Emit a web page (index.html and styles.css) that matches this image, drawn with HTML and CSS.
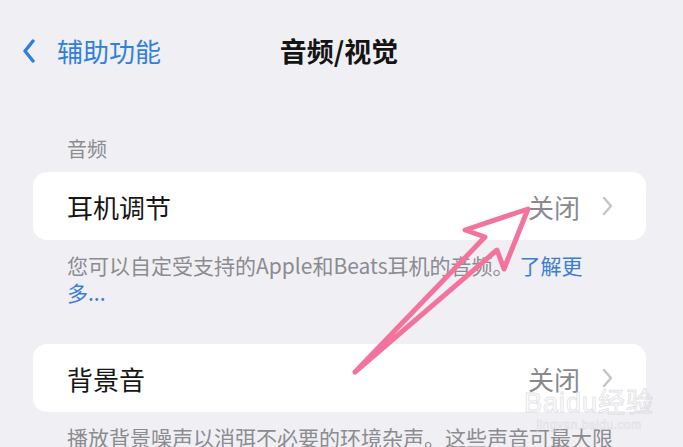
FILE: index.html
```html
<!DOCTYPE html>
<html lang="zh-CN">
<head>
    <meta charset="UTF-8">
    <meta name="viewport" content="width=device-width, initial-scale=1.0">
    <title>音频/视觉</title>
    <link rel="stylesheet" href="styles.css">
</head>
<body>
<div class="page">
    <div class="nav">
        <div class="nav-back">
            <svg class="back-icon" width="12" height="24" viewBox="0 0 12 24">
                <path d="M10 2 L2 12 L10 22" fill="none" stroke="#2f7fdf" stroke-width="3.4" stroke-linecap="round" stroke-linejoin="round"/>
            </svg>
            <span>辅助功能</span>
        </div>
        <div class="nav-title">音频/视觉</div>
        <div></div>
    </div>

    <div class="section-header">音频</div>
    <div class="card">
        <div class="card-label">耳机调节</div>
        <div class="card-value">关闭</div>
        <svg class="chevron" width="11" height="20" viewBox="0 0 11 20">
            <path d="M2 2 L9 10 L2 18" fill="none" stroke="#c5c5c9" stroke-width="2.4" stroke-linecap="round" stroke-linejoin="round"/>
        </svg>
    </div>
    <div class="section-footer">您可以自定受支持的Apple和Beats耳机的音频。<span class="link">了解更多...</span></div>

    <div class="card card-second">
        <div class="card-label">背景音</div>
        <div class="card-value">关闭</div>
        <svg class="chevron" width="11" height="20" viewBox="0 0 11 20">
            <path d="M2 2 L9 10 L2 18" fill="none" stroke="#c5c5c9" stroke-width="2.4" stroke-linecap="round" stroke-linejoin="round"/>
        </svg>
    </div>
    <div class="section-footer">播放背景噪声以消弭不必要的环境杂声。这些声音可最大限度地减少干扰，帮助你专注、平静或休息。</div>

    <!-- annotation drawn on top of the screenshot -->
    <svg class="arrow" width="683" height="447" viewBox="0 0 683 447">
        <path d="M355 372 L485 237 L465 230 L528 209 L504 269 L497 250 Z" fill="none" stroke="#f2739b" stroke-width="5" stroke-linejoin="round" stroke-linecap="round"/>
    </svg>

    <div class="watermark">
        <div class="watermark-logo">Baidu经验</div>
        <div class="watermark-url">jingyan.baidu.com</div>
    </div>
</div>
</body>
</html>
```

FILE: styles.css
```css
* {
    box-sizing: border-box;
}

body {
    margin: 0;
    background-color: #f0eff4;
    font-family: "Noto Sans CJK SC", "Noto Sans", sans-serif;
}

.page {
    position: relative;
    width: 683px;
    height: 447px;
    overflow: hidden;
}

.nav {
    display: grid;
    grid-template-columns: 1fr auto 1fr;
    align-items: center;
    padding: 36px 0 0 23px;
    height: 66px;
    font-size: 26px;
    line-height: 30px;
}

.nav-back {
    display: flex;
    align-items: center;
    gap: 22px;
    color: #2f7fdf;
}

.back-icon {
    display: block;
}

.nav-title {
    font-size: 27px;
    font-weight: 700;
    color: #141414;
    margin-right: 28px;
}

.section-header {
    margin: 70px 0 0 67px;
    font-size: 20px;
    line-height: 26px;
    color: #8c8c91;
}

.card {
    display: flex;
    align-items: center;
    height: 68px;
    margin: 10px 37px 0 33px;
    padding: 0 33px 0 34px;
    background-color: #ffffff;
    border-radius: 14px;
    font-size: 26px;
}

.card-second {
    margin-top: 38px;
}

.card-label {
    flex: 1;
    color: #161616;
}

.card-value {
    color: #8a8a8e;
    margin-right: 22px;
}

.chevron {
    display: block;
}

.section-footer {
    margin: 12px 0 0 67px;
    width: 550px;
    font-size: 21px;
    line-height: 27px;
    color: #8b8b90;
}

.link {
    color: #3a7ed2;
    margin-left: 6px;
}

.arrow {
    position: absolute;
    top: 0;
    left: 0;
}

.watermark {
    position: absolute;
    left: 524px;
    top: 388px;
    font-family: "Liberation Sans", "Noto Sans CJK SC", sans-serif;
    color: rgba(255, 255, 255, 0.35);
    -webkit-text-stroke: 1px rgba(200, 200, 206, 0.5);
    text-align: center;
}

.watermark-logo {
    font-size: 27px;
    line-height: 30px;
    letter-spacing: 1px;
}

.watermark-url {
    font-size: 12px;
    line-height: 14px;
    letter-spacing: 0.5px;
    -webkit-text-stroke: 0.5px rgba(200, 200, 206, 0.55);
}
```
